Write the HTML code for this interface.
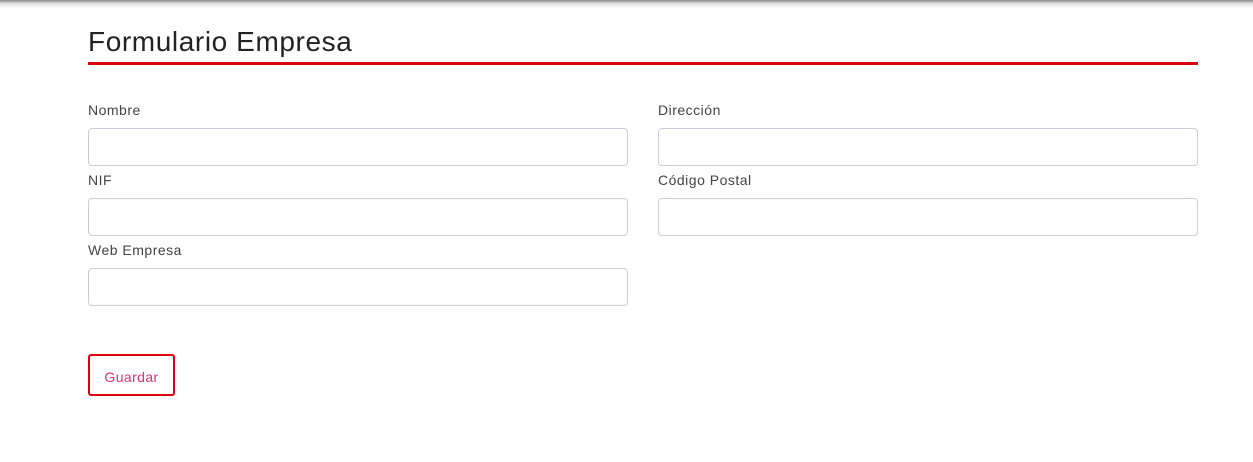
<!DOCTYPE html>
<html><head><style>
body{margin:0;width:1253px;height:462px;background:#fff;font-family:"Liberation Sans",sans-serif;position:relative;overflow:hidden}
.shadow{position:absolute;left:0;top:0;width:1253px;height:8px;background:linear-gradient(#888,#ddd 40%,#fff)}
h1{position:absolute;left:88px;top:26px;margin:0;font-weight:normal;font-size:28px;letter-spacing:0.6px;color:#222}
.line{position:absolute;left:88px;top:62px;width:1110px;height:3px;background:#d8000f}
.lab{position:absolute;font-size:14px;color:#444;letter-spacing:0.5px}
.in{position:absolute;border:1px solid #ccd;border-radius:4px;box-sizing:border-box;width:540px;height:38px}
.btn{position:absolute;left:88px;top:354px;width:87px;height:42px;box-sizing:border-box;border:2px solid #e0000f;border-radius:3px;color:#e0307a;font-size:14px;letter-spacing:0.4px;text-align:center;line-height:42px}
</style></head><body>
<div class="shadow"></div>
<h1>Formulario Empresa</h1>
<div class="line"></div>
<div class="lab" style="left:88px;top:102px">Nombre</div>
<div class="in" style="left:88px;top:128px"></div>
<div class="lab" style="left:88px;top:172px">NIF</div>
<div class="in" style="left:88px;top:198px"></div>
<div class="lab" style="left:88px;top:242px">Web Empresa</div>
<div class="in" style="left:88px;top:268px"></div>
<div class="lab" style="left:658px;top:102px">Dirección</div>
<div class="in" style="left:658px;top:128px"></div>
<div class="lab" style="left:658px;top:172px">Código Postal</div>
<div class="in" style="left:658px;top:198px"></div>
<div class="btn">Guardar</div>
</body></html>
